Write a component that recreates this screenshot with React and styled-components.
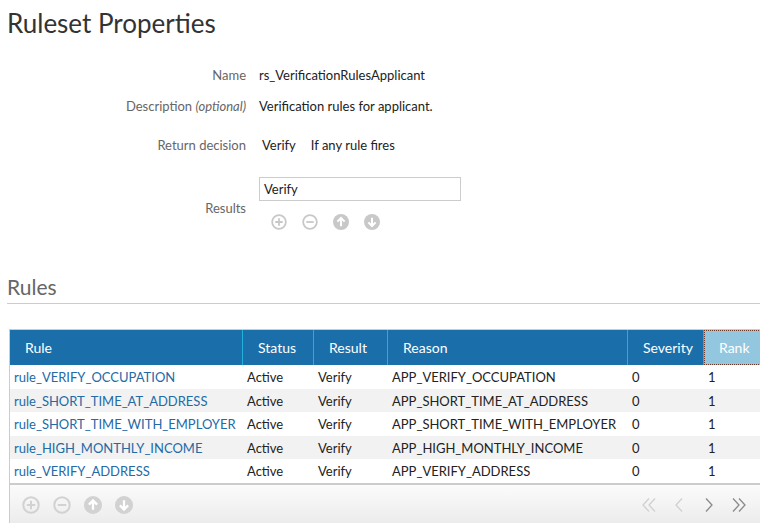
import React from "react";
import styled, { createGlobalStyle } from "styled-components";

const Global = createGlobalStyle`
  html, body { margin: 0; padding: 0; background: #fff; overflow: hidden; }
  body { font-family: Lato, "Open Sans", "Liberation Sans", sans-serif; color: #222; }
`;

const Page = styled.div`
  padding-left: 7px;
  width: 753px;
`;

const Title = styled.h1`
  margin: 0;
  padding-top: 6px;
  font-size: 26px;
  line-height: 34px;
  font-weight: 400;
  color: #333;
`;

const Form = styled.div`
  display: flex;
  flex-direction: column;
  margin-top: 22px;
`;

const FormRow = styled.div`
  display: grid;
  grid-template-columns: 239px 1fr;
  column-gap: 13px;
  align-items: center;
  min-height: ${(p) => p.$h || 26}px;
  margin-top: ${(p) => p.$mt || 0}px;
  font-size: 13px;
`;

const Label = styled.div`
  text-align: right;
  color: #666;
  em { font-style: italic; }
`;

const Value = styled.div`
  color: #222;
  display: flex;
  gap: 15px;
  padding-left: ${(p) => p.$pl || 0}px;
`;

const ResultsBox = styled.div`
  display: flex;
  flex-direction: column;
  align-self: start;
`;

const Input = styled.div`
  box-sizing: border-box;
  width: 202px;
  height: 24px;
  border: 1px solid #ccc;
  padding: 0 4px;
  line-height: 22px;
  font-size: 13px;
  color: #222;
`;

const IconRow = styled.div`
  display: flex;
  align-items: center;
  gap: ${(p) => p.$gap}px;
  padding-left: ${(p) => p.$pl || 0}px;
  margin-top: ${(p) => p.$mt || 0}px;
`;

const SectionTitle = styled.h2`
  margin: 35px 0 0;
  font-size: 21px;
  line-height: 26px;
  font-weight: 400;
  color: #666;
  padding-bottom: 3px;
  border-bottom: 1px solid #ccc;
`;

const Table = styled.div`
  margin: 25px 0 0 2px;
  width: 775px;
  border-left: 1px solid #ccc;
  border-top: 1px solid #ccc;
`;

const COLS = "233px 71px 74px 240px 76px 81px";

const HeadRow = styled.div`
  display: grid;
  grid-template-columns: ${COLS};
  height: 35px;
  background: #1a6fab;
`;

const HeadCell = styled.div`
  display: flex;
  align-items: center;
  padding-left: 15px;
  font-size: 14px;
  color: #fff;
  border-right: ${(p) => (p.$last ? "none" : "1px solid #1fb1dc")};
  background: ${(p) => (p.$active ? "#93c7df" : "transparent")};
  outline: ${(p) => (p.$active ? "1px dotted #6b3a2a" : "none")};
  outline-offset: -1px;
`;

const Row = styled.div`
  display: grid;
  grid-template-columns: ${COLS};
  height: ${(p) => (p.$odd ? 23 : 24)}px;
  background: ${(p) => (p.$odd ? "#f2f2f2" : "#fff")};
  font-size: 13px;
  align-items: center;
`;

const Cell = styled.div`
  padding-left: 4px;
  white-space: nowrap;
  color: #222;
`;

const LinkCell = styled(Cell)`
  color: #236aa6;
`;

const Footer = styled.div`
  display: flex;
  align-items: center;
  justify-content: space-between;
  height: 40px;
  border-top: 2px solid #ccc;
  background: linear-gradient(#fbfbfb, #ebebeb);
  padding: 0 36px 0 12px;
`;

const Pager = styled.div`
  display: flex;
  align-items: center;
  gap: 10px;
`;

const CirclePlus = ({ size, color }) => (
  <svg width={size} height={size} viewBox="0 0 18 18">
    <circle cx="9" cy="9" r="7.7" fill="none" stroke={color} strokeWidth="2" />
    <path d="M9 4.8V13.2M4.8 9H13.2" stroke={color} strokeWidth="2" />
  </svg>
);

const CircleMinus = ({ size, color }) => (
  <svg width={size} height={size} viewBox="0 0 18 18">
    <circle cx="9" cy="9" r="7.7" fill="none" stroke={color} strokeWidth="2" />
    <path d="M4.8 9H13.2" stroke={color} strokeWidth="2" />
  </svg>
);

const CircleArrow = ({ size, color, down }) => (
  <svg width={size} height={size} viewBox="0 0 18 18">
    <circle cx="9" cy="9" r="9" fill={color} />
    <g transform={down ? "rotate(180 9 9)" : undefined}>
      <path
        d="M9 4.5V13.8M4.9 8.6L9 4.5L13.1 8.6"
        fill="none"
        stroke="#fff"
        strokeWidth="2.3"
        strokeLinejoin="miter"
      />
    </g>
  </svg>
);

const Chevron = ({ dir, double, color }) => {
  const single = "M13 1.5L7 8L13 14.5";
  const dbl = "M10 1.5L4 8L10 14.5M16 1.5L10 8L16 14.5";
  return (
    <svg width="20" height="16" viewBox="0 0 20 16">
      <g transform={dir === "right" ? "translate(20 0) scale(-1 1)" : undefined}>
        <path d={double ? dbl : single} fill="none" stroke={color} strokeWidth="1.3" />
      </g>
    </svg>
  );
};

const EditIcons = ({ size, color, gap, pl, mt }) => (
  <IconRow $gap={gap} $pl={pl} $mt={mt}>
    <CirclePlus size={size} color={color} />
    <CircleMinus size={size} color={color} />
    <CircleArrow size={size} color={color} />
    <CircleArrow size={size} color={color} down />
  </IconRow>
);

const rules = [
  ["rule_VERIFY_OCCUPATION", "APP_VERIFY_OCCUPATION"],
  ["rule_SHORT_TIME_AT_ADDRESS", "APP_SHORT_TIME_AT_ADDRESS"],
  ["rule_SHORT_TIME_WITH_EMPLOYER", "APP_SHORT_TIME_WITH_EMPLOYER"],
  ["rule_HIGH_MONTHLY_INCOME", "APP_HIGH_MONTHLY_INCOME"],
  ["rule_VERIFY_ADDRESS", "APP_VERIFY_ADDRESS"],
];

export default function App() {
  return (
    <>
      <Global />
      <Page>
        <Title>Ruleset Properties</Title>
        <Form>
          <FormRow>
            <Label>Name</Label>
            <Value>rs_VerificationRulesApplicant</Value>
          </FormRow>
          <FormRow $mt={5}>
            <Label>
              Description <em>(optional)</em>
            </Label>
            <Value>Verification rules for applicant.</Value>
          </FormRow>
          <FormRow $mt={13}>
            <Label>Return decision</Label>
            <Value $pl={3}>
              <span>Verify</span>
              <span>If any rule fires</span>
            </Value>
          </FormRow>
          <FormRow $mt={19} $h={62}>
            <Label>Results</Label>
            <ResultsBox>
              <Input>Verify</Input>
              <EditIcons size={16} color="#c8c8c8" gap={15} pl={12} mt={13} />
            </ResultsBox>
          </FormRow>
        </Form>

        <SectionTitle>Rules</SectionTitle>

        <Table>
          <HeadRow>
            <HeadCell>Rule</HeadCell>
            <HeadCell>Status</HeadCell>
            <HeadCell>Result</HeadCell>
            <HeadCell>Reason</HeadCell>
            <HeadCell>Severity</HeadCell>
            <HeadCell $last $active>Rank</HeadCell>
          </HeadRow>
          {rules.map(([rule, reason], i) => (
            <Row key={rule} $odd={i % 2 === 1}>
              <LinkCell>{rule}</LinkCell>
              <Cell>Active</Cell>
              <Cell>Verify</Cell>
              <Cell>{reason}</Cell>
              <Cell>0</Cell>
              <Cell>1</Cell>
            </Row>
          ))}
          <Footer>
            <EditIcons size={18} color="#d2d2d2" gap={13} />
            <Pager>
              <Chevron double color="#d0d0d0" />
              <Chevron color="#d0d0d0" />
              <Chevron dir="right" color="#8a8a8a" />
              <Chevron dir="right" double color="#8a8a8a" />
            </Pager>
          </Footer>
        </Table>
      </Page>
    </>
  );
}
